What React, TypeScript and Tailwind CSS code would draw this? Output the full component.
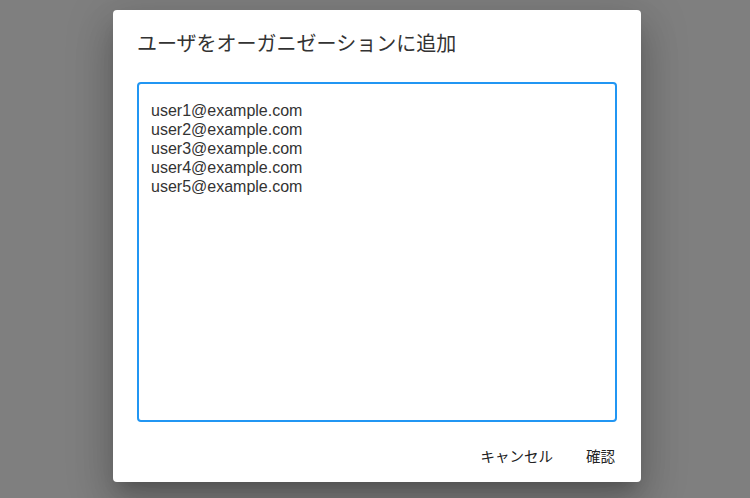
import { useState } from "react";

const FONT = {
  fontFamily: '"Liberation Sans", "Noto Sans CJK JP", sans-serif',
};

export default function App() {
  const [emails, setEmails] = useState(
    [
      "user1@example.com",
      "user2@example.com",
      "user3@example.com",
      "user4@example.com",
      "user5@example.com",
    ].join("\n")
  );

  return (
    <div
      className="flex h-[498px] w-[750px] justify-center bg-[#7f7f7f] pl-[4px] pt-[10px]"
      style={FONT}
    >
      <div className="flex h-[472px] w-[528px] flex-col rounded bg-white shadow-[0_11px_15px_-7px_rgba(0,0,0,0.2),0_24px_38px_3px_rgba(0,0,0,0.14),0_9px_46px_8px_rgba(0,0,0,0.12)]">
        {/* タイトル */}
        <h2 className="px-6 pt-[18px] text-[20px] leading-[32px] text-[#333]">
          ユーザをオーガニゼーションに追加
        </h2>

        <div className="px-6 pt-[22px]">
          <textarea
            value={emails}
            onChange={(e) => setEmails(e.target.value)}
            className="block h-[340px] w-full resize-none rounded border-2 border-[#2196f3] px-3 pt-[17px] text-[16px] leading-[19px] text-[#333] outline-none"
            style={FONT}
          />
        </div>

        {/* ボタン */}
        <div className="flex justify-end gap-[3px] px-2 pt-[20px]">
          <button className="px-3 py-1 text-[14.5px] leading-[22px] text-[#222]">
            キャンセル
          </button>
          <button className="px-[18px] py-1 text-[14.5px] leading-[22px] text-[#222]">
            確認
          </button>
        </div>
      </div>
    </div>
  );
}
